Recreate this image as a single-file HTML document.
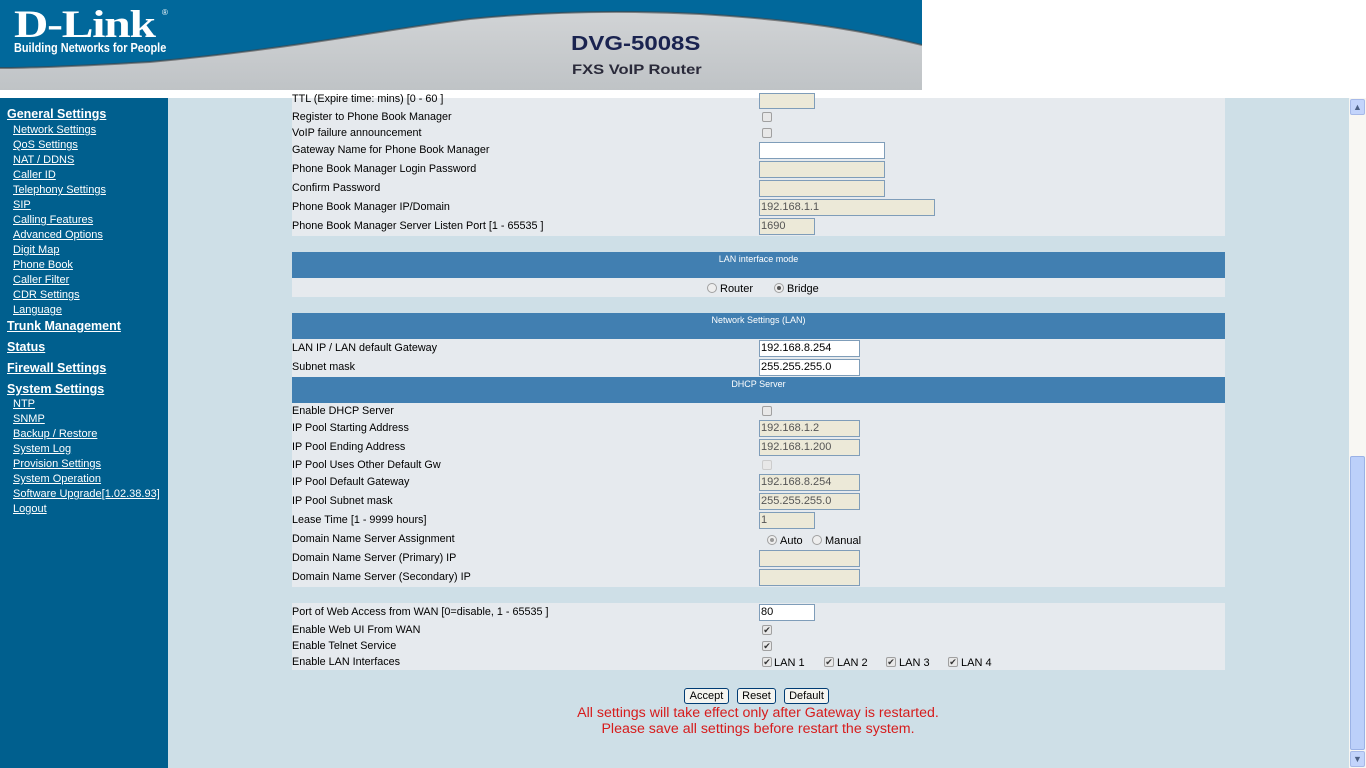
<!DOCTYPE html>
<html><head><meta charset="utf-8"><style>
*{margin:0;padding:0;box-sizing:border-box}
body{width:1366px;height:768px;overflow:hidden;background:#fff;font-family:"Liberation Sans",Arial,sans-serif;position:relative}
.a{position:absolute;white-space:nowrap}
#hdr{left:0;top:0;width:922px;height:90px;background:#c8ccd0;overflow:hidden}
#side{left:0;top:98px;width:168px;height:670px;background:#005f8e}
#main{left:168px;top:98px;width:1181px;height:670px;background:#cedfe7}
.s{color:#fff;text-decoration:underline;font-size:11px;left:13px}
.h{color:#fff;text-decoration:underline;font-size:12.5px;font-weight:bold;left:7px}
.row{position:absolute;left:292px;width:933px;background:#e6eaee}
.band{position:absolute;left:292px;width:933px;height:26px;background:#417fb1;color:#fff;font-size:9px;text-align:center;padding-top:2px;padding-left:0}
.l{font-size:10.8px;color:#000;left:292px}
.in{position:absolute;left:759px;height:17px;border:1px solid #7f9db9;background:#ece9d8;font-size:11px;padding-left:1px;line-height:15px;color:#555}
.w{background:#fff;color:#000}
.cb{position:absolute;width:10px;height:10px;border:1px solid #a0a0a0;border-radius:2px;background:#e8e8e8;font-size:9px;line-height:8px;text-align:center;color:#333}
.rd{position:absolute;width:10px;height:10px;border:1px solid #a0a0a0;border-radius:50%;background:#eee}
.t{font-size:11px;color:#000}
.btn{position:absolute;top:688px;height:16px;border:1px solid #003c74;border-radius:3px;background:#f4f4f0;font-size:11px;text-align:center;line-height:14px}
</style></head><body>
<div id="hdr" class="a">
<svg width="922" height="90" style="position:absolute;left:0;top:0">
<defs><linearGradient id="g" x1="0" y1="0" x2="0" y2="1"><stop offset="0" stop-color="#d4d6d8"/><stop offset="1" stop-color="#bfc3c6"/></linearGradient></defs>
<rect width="922" height="90" fill="url(#g)"/>
<path d="M0 0H922V45C860 30 800 20 700 14 620 10 540 12 470 19 380 30 300 48 150 62 80 66 30 68 0 68Z" fill="#01689b"/>
<path d="M922 45C860 30 800 20 700 14 620 10 540 12 470 19 380 30 300 48 150 62 80 66 30 68 0 68" fill="none" stroke="#444" stroke-width="2" opacity=".6"/>
</svg>
<div class="a" style="left:14px;top:2px;font-family:'Liberation Serif',serif;font-weight:bold;font-size:39px;color:#fff;letter-spacing:-1px;transform:scaleX(1.22);transform-origin:left">D-Link</div>
<div class="a" style="left:162px;top:8px;font-size:8px;color:#fff">®</div>
<div class="a" style="left:14px;top:40px;font-size:13px;font-weight:bold;color:#fff;transform:scaleX(.84);transform-origin:left">Building Networks for People</div>
<div class="a" style="left:571px;top:33px;font-size:20px;font-weight:bold;color:#1a2350;transform:scaleX(1.2);transform-origin:left">DVG-5008S</div>
<div class="a" style="left:572px;top:61px;font-size:14px;font-weight:bold;color:#2a2a3a;transform:scaleX(1.18);transform-origin:left">FXS VoIP Router</div>
</div>
<div id="side" class="a"></div>
<div id="main" class="a"></div>
<div class="a h" style="top:107px">General Settings</div>
<div class="a s" style="top:124px">Network Settings</div>
<div class="a s" style="top:139px">QoS Settings</div>
<div class="a s" style="top:154px">NAT / DDNS</div>
<div class="a s" style="top:169px">Caller ID</div>
<div class="a s" style="top:184px">Telephony Settings</div>
<div class="a s" style="top:199px">SIP</div>
<div class="a s" style="top:214px">Calling Features</div>
<div class="a s" style="top:229px">Advanced Options</div>
<div class="a s" style="top:244px">Digit Map</div>
<div class="a s" style="top:259px">Phone Book</div>
<div class="a s" style="top:274px">Caller Filter</div>
<div class="a s" style="top:289px">CDR Settings</div>
<div class="a s" style="top:304px">Language</div>
<div class="a h" style="top:319px">Trunk Management</div>
<div class="a h" style="top:340px">Status</div>
<div class="a h" style="top:361px">Firewall Settings</div>
<div class="a h" style="top:382px">System Settings</div>
<div class="a s" style="top:398px">NTP</div>
<div class="a s" style="top:413px">SNMP</div>
<div class="a s" style="top:428px">Backup / Restore</div>
<div class="a s" style="top:443px">System Log</div>
<div class="a s" style="top:458px">Provision Settings</div>
<div class="a s" style="top:473px">System Operation</div>
<div class="a s" style="top:488px">Software Upgrade[1.02.38.93]</div>
<div class="a s" style="top:503px">Logout</div>

<div class="row" style="top:98px;height:138px"></div>
<div class="a l" style="top:93px">TTL (Expire time: mins) [0 - 60 ]</div>
<div class="in" style="top:93px;width:56px;height:16px"></div>
<div class="a l" style="top:111px">Register to Phone Book Manager</div><div class="cb" style="left:762px;top:112px"></div>
<div class="a l" style="top:127px">VoIP failure announcement</div><div class="cb" style="left:762px;top:128px"></div>
<div class="a l" style="top:144px">Gateway Name for Phone Book Manager</div><div class="in w" style="top:142px;width:126px"></div>
<div class="a l" style="top:163px">Phone Book Manager Login Password</div><div class="in" style="top:161px;width:126px"></div>
<div class="a l" style="top:182px">Confirm Password</div><div class="in" style="top:180px;width:126px"></div>
<div class="a l" style="top:201px">Phone Book Manager IP/Domain</div><div class="in" style="top:199px;width:176px">192.168.1.1</div>
<div class="a l" style="top:220px">Phone Book Manager Server Listen Port [1 - 65535 ]</div><div class="in" style="top:218px;width:56px">1690</div>

<div class="band" style="top:252px">LAN interface mode</div>
<div class="row" style="top:278px;height:19px"></div>
<div class="rd" style="left:707px;top:283px"></div><div class="a t" style="left:720px;top:283px">Router</div>
<div class="rd" style="left:774px;top:283px"><div style="width:4px;height:4px;border-radius:50%;background:#555;margin:2px"></div></div><div class="a t" style="left:787px;top:283px">Bridge</div>

<div class="band" style="top:313px">Network Settings (LAN)</div>
<div class="row" style="top:339px;height:38px"></div>
<div class="a l" style="top:342px">LAN IP / LAN default Gateway</div><div class="in w" style="top:340px;width:101px">192.168.8.254</div>
<div class="a l" style="top:361px">Subnet mask</div><div class="in w" style="top:359px;width:101px">255.255.255.0</div>
<div class="band" style="top:377px">DHCP Server</div>
<div class="row" style="top:403px;height:184px"></div>
<div class="a l" style="top:405px">Enable DHCP Server</div><div class="cb" style="left:762px;top:406px"></div>
<div class="a l" style="top:422px">IP Pool Starting Address</div><div class="in" style="top:420px;width:101px">192.168.1.2</div>
<div class="a l" style="top:441px">IP Pool Ending Address</div><div class="in" style="top:439px;width:101px">192.168.1.200</div>
<div class="a l" style="top:459px">IP Pool Uses Other Default Gw</div><div class="cb" style="left:762px;top:460px;border-color:#ccc"></div>
<div class="a l" style="top:476px">IP Pool Default Gateway</div><div class="in" style="top:474px;width:101px">192.168.8.254</div>
<div class="a l" style="top:495px">IP Pool Subnet mask</div><div class="in" style="top:493px;width:101px">255.255.255.0</div>
<div class="a l" style="top:514px">Lease Time [1 - 9999 hours]</div><div class="in" style="top:512px;width:56px">1</div>
<div class="a l" style="top:533px">Domain Name Server Assignment</div>
<div class="rd" style="left:767px;top:535px"><div style="width:4px;height:4px;border-radius:50%;background:#999;margin:2px"></div></div><div class="a t" style="left:780px;top:535px">Auto</div>
<div class="rd" style="left:812px;top:535px"></div><div class="a t" style="left:825px;top:535px">Manual</div>
<div class="a l" style="top:552px">Domain Name Server (Primary) IP</div><div class="in" style="top:550px;width:101px"></div>
<div class="a l" style="top:571px">Domain Name Server (Secondary) IP</div><div class="in" style="top:569px;width:101px"></div>

<div class="row" style="top:603px;height:67px"></div>
<div class="a l" style="top:606px">Port of Web Access from WAN [0=disable, 1 - 65535 ]</div><div class="in w" style="top:604px;width:56px">80</div>
<div class="a l" style="top:624px">Enable Web UI From WAN</div><div class="cb" style="left:762px;top:625px">✔</div>
<div class="a l" style="top:640px">Enable Telnet Service</div><div class="cb" style="left:762px;top:641px">✔</div>
<div class="a l" style="top:656px">Enable LAN Interfaces</div>
<div class="cb" style="left:762px;top:657px">✔</div><div class="a t" style="left:774px;top:657px">LAN 1</div>
<div class="cb" style="left:824px;top:657px">✔</div><div class="a t" style="left:837px;top:657px">LAN 2</div>
<div class="cb" style="left:886px;top:657px">✔</div><div class="a t" style="left:899px;top:657px">LAN 3</div>
<div class="cb" style="left:948px;top:657px">✔</div><div class="a t" style="left:961px;top:657px">LAN 4</div>

<div class="btn" style="left:684px;width:45px">Accept</div>
<div class="btn" style="left:737px;width:39px">Reset</div>
<div class="btn" style="left:784px;width:45px">Default</div>
<div class="a" style="left:0;width:1516px;top:705px;text-align:center;color:#d61c1c;font-size:14.2px;line-height:16px">All settings will take effect only after Gateway is restarted.<br>Please save all settings before restart the system.</div>

<div class="a" style="left:1349px;top:98px;width:17px;height:670px;background:#f8f7f3"></div>
<div class="a" style="left:1350px;top:99px;width:15px;height:16px;background:#c3d4fb;border:1px solid #a6b9e8;border-radius:2px;font-size:9px;text-align:center;color:#4d6185;line-height:14px">▲</div>
<div class="a" style="left:1350px;top:456px;width:15px;height:294px;background:#bcd0fa;border:1px solid #9bb2e6;border-radius:2px"></div>
<div class="a" style="left:1350px;top:751px;width:15px;height:16px;background:#c3d4fb;border:1px solid #a6b9e8;border-radius:2px;font-size:9px;text-align:center;color:#4d6185;line-height:14px">▼</div>
</body></html>
